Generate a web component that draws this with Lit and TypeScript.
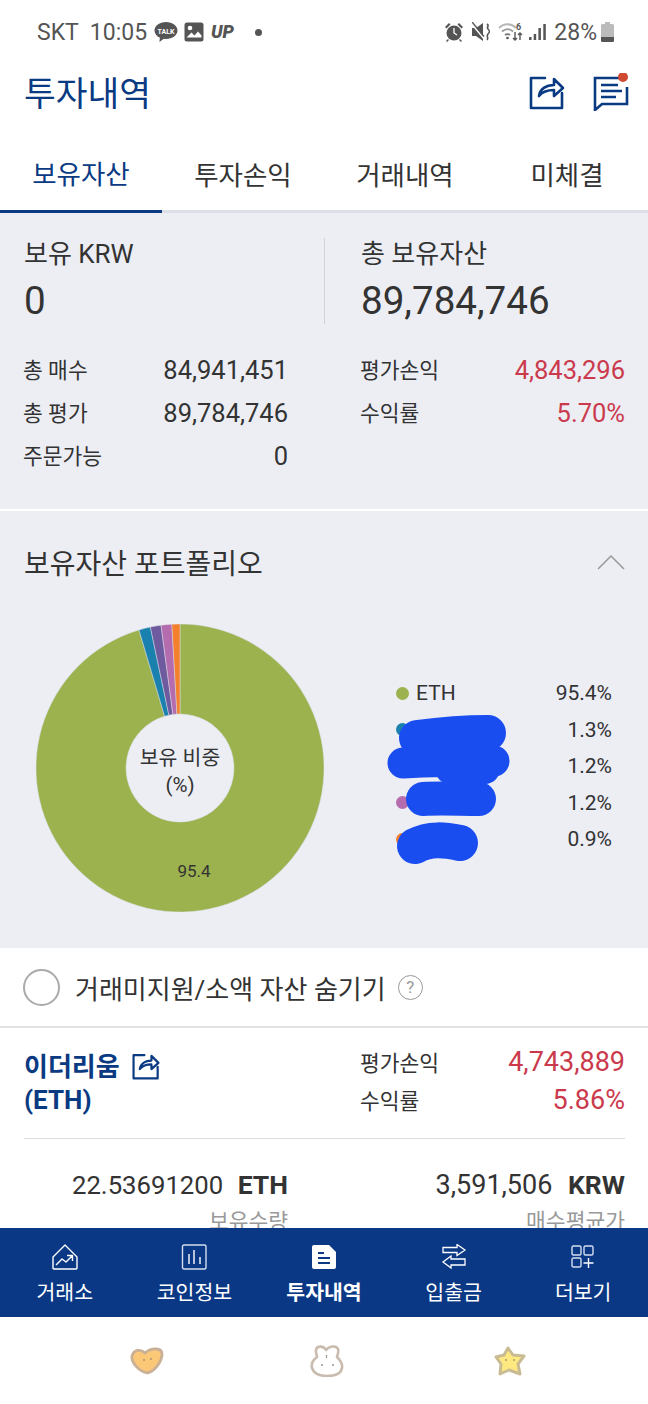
import { LitElement, html, css, svg } from "lit";
import { customElement } from "lit/decorators.js";

const slices = [
  { p: 95.4, c: "#9bb24e" },
  { p: 1.3, c: "#1a80ad" },
  { p: 1.2, c: "#6e5a9e" },
  { p: 1.2, c: "#b56cae" },
  { p: 0.9, c: "#f47f2d" },
];

function arc(cx: number, cy: number, ro: number, ri: number, a0: number, a1: number) {
  const pt = (r: number, a: number) => {
    const t = (a * Math.PI) / 180;
    return `${(cx + r * Math.sin(t)).toFixed(2)} ${(cy - r * Math.cos(t)).toFixed(2)}`;
  };
  const large = a1 - a0 > 180 ? 1 : 0;
  return `M${pt(ro, a0)}A${ro} ${ro} 0 ${large} 1 ${pt(ro, a1)}L${pt(ri, a1)}A${ri} ${ri} 0 ${large} 0 ${pt(ri, a0)}Z`;
}

const shareIcon = (s: number, sw: number) => html`<svg width=${s} height=${s} viewBox="0 0 36 36" fill="none" stroke="#0a3a82" stroke-width=${sw} stroke-linejoin="round" stroke-linecap="round">
  <path d="M16 4H2v30h31V19"/>
  <path d="M10 22c1-7 7-11 15-11V5l9 9-9 8v-6c-6 0-11 1-15 6z"/>
</svg>`;

@customElement("app-root")
export class AppRoot extends LitElement {
  static styles = css`
    :host { display: block; width: 648px; height: 1404px; font-family: Roboto, "Noto Sans CJK KR", sans-serif; color: #333; background: #fff; overflow: hidden; }
    .page { height: 1404px; display: flex; flex-direction: column; }
    .status { height: 64px; flex: none; box-sizing: border-box; padding: 0 34px 0 37px; display: flex; align-items: center; color: #555; font-size: 23px; }
    .status .l, .status .r { display: flex; align-items: center; }
    .status .l { gap: 4px; flex: 1; }
    .status .time { margin: 0 3px 0 7px; }
    .status .dot { width: 7px; height: 7px; border-radius: 50%; background: #555; margin-left: 10px; }
    .status .r { gap: 5px; }
    .up { margin-left: 1px; }
    .head { height: 56px; flex: none; display: flex; align-items: center; padding: 4px 17px 0 24px; box-sizing: border-box; }
    .head h1 { margin: 0; flex: 1; font-size: 34.5px; font-weight: 400; color: #0a3a82; line-height: 52px; }
    .head .icons { display: flex; gap: 28px; align-items: center; margin-top: -4px; }
    .tabs { height: 93px; flex: none; display: grid; grid-template-columns: 162px 162px 162px 162px; box-sizing: border-box; border-bottom: 3px solid #dcdfe6; }
    .tab { display: flex; align-items: center; justify-content: center; font-size: 26.5px; color: #333; height: 93px; box-sizing: border-box; padding-top: 14px; }
    .tab.on { color: #0a3a82; border-bottom: 3px solid #0a3a82; }
    .scroll { flex: 1; min-height: 0; overflow: hidden; }
    .summary { background: #eceef4; height: 298px; box-sizing: border-box; padding: 25px 23px 0 24px; border-bottom: 2px solid #fff; }
    .tops { display: grid; grid-template-columns: 300px 1fr; height: 85px; }
    .tops > div:last-child { border-left: 1px solid #cfd2d9; padding-left: 36px; }
    .cap { font-size: 26px; line-height: 32px; }
    .big { font-size: 38.6px; line-height: 46px; margin-top: 8px; }
    .stats { display: grid; grid-template-columns: 264px 264px; column-gap: 73px; margin-top: 25px; }
    .st { display: flex; justify-content: space-between; align-items: center; height: 43px; }
    .st .k { font-size: 21.5px; position: relative; top: -1px; left: -1px; }
    .st .v { font-size: 25.5px; }
    .red { color: #cb3a4c; }
    .port { background: #eceef4; height: 437px; position: relative; }
    .port-h { display: flex; align-items: center; justify-content: space-between; padding: 32px 23px 0 24px; height: 38px; font-size: 28px; }
    .chart { display: flex; margin-top: 43px; }
    .pie { margin-left: 36px; flex: none; }
    .legend { margin-left: 72px; width: 216px; margin-top: 51px; }
    .lg { display: flex; align-items: center; height: 36.5px; font-size: 21px; }
    .lg i { width: 13px; height: 13px; border-radius: 50%; margin-right: 7px; }
    .lg span:last-of-type { margin-left: auto; }
    .scribble { position: absolute; left: 380px; top: 200px; }
    .hide { height: 80px; display: flex; align-items: center; padding-left: 23px; font-size: 26px; box-sizing: border-box; border-bottom: 2px solid #e2e2e2; }
    .radio { width: 37px; height: 37px; border-radius: 50%; border: 2px solid #aaa; box-sizing: border-box; margin-right: 15px; }
    .q { width: 25px; height: 25px; border: 1.5px solid #999; border-radius: 50%; box-sizing: border-box; margin-left: 12px; font-size: 17px; line-height: 22px; text-align: center; color: #999; }
    .coin { display: grid; grid-template-columns: 337px 264px; padding: 15px 23px 0 24px; height: 110px; box-sizing: border-box; }
    .coin-n { color: #0a3a82; font-size: 26px; font-weight: 700; line-height: 33px; padding-top: 8px; }
    .coin-n svg { vertical-align: -4px; margin-left: 12px; }
    .coin .st { height: 38px; }
    .coin .st .v { font-size: 27px; }
    .rule { height: 1px; background: #ddd; margin: 0 23px 0 24px; }
    .hold { display: grid; grid-template-columns: 264px 264px; column-gap: 73px; padding: 26px 23px 0 24px; }
    .hold .a { text-align: right; font-size: 26.5px; line-height: 40px; white-space: nowrap; }
    .hold .a b { font-weight: 700; }
    .hold .n1 { font-size: 25.7px; margin-right: 8px; }
    .hold .n2 { font-size: 27px; margin-right: 9px; }
    .hold .b { text-align: right; font-size: 21.5px; line-height: 28px; color: #999; margin-top: 3px; }
    .nav { flex: none; height: 89px; background: #0a3885; display: grid; grid-template-columns: repeat(5, 1fr); color: #fff; }
    .ni { display: flex; flex-direction: column; align-items: center; padding-top: 16px; box-sizing: border-box; font-size: 20.5px; line-height: 30px; gap: 8px; }
    .ni svg { display: block; }
    .ni.on { font-weight: 700; }
    .gest { flex: none; height: 87px; display: flex; align-items: center; padding-left: 130px; }
    .gest svg { flex: none; }
    .gest .rabbit { margin-left: 145px; }
    .gest .star { margin-left: 148px; }
  `;

  render() {
    let a = 0;
    const arcs = slices.map((s) => {
      const a0 = a;
      a += (s.p / 100) * 360;
      return svg`<path d=${arc(144, 144, 144, 54, a0, a)} fill=${s.c} stroke="#d9dde3" stroke-width="0.5"/>`;
    });
    const legend = [
      ["#9bb24e", "ETH", "95.4%"],
      ["#1a80ad", "", "1.3%"],
      ["#6e5a9e", "", "1.2%"],
      ["#b56cae", "", "1.2%"],
      ["#f47f2d", "", "0.9%"],
    ];
    return html`<div class="page">
      <div class="status">
        <div class="l">
          <span>SKT</span><span class="time">10:05</span>
          <svg width="24" height="22" viewBox="0 0 24 22"><path d="M12 1C5.600 1 .5 4.800.5 9.500c0 3.100 2.200 5.700 5.400 7.200L5.400 21l4.400-3.200c.7.1 1.500.2 2.200.2 6.400 0 11.500-3.800 11.500-8.500S18.400 1 12 1z" fill="#555"/><text x="12" y="12.500" text-anchor="middle" font-size="7" font-weight="700" fill="#fff" font-family="Roboto">TALK</text></svg>
          <svg width="20" height="20" viewBox="0 0 20 20" style="margin-left:2px"><rect width="19" height="19" x=".5" y=".5" rx="2.500" fill="#555"/><circle cx="6" cy="6" r="2.300" fill="#fff"/><path d="M2.500 15.500l5-5 3 3 3.500-4 3.500 4v2z" fill="#fff"/></svg>
          <svg class="up" width="32" height="18" viewBox="0 0 32 18"><text x="2" y="15" font-size="18" font-weight="900" font-style="italic" fill="#555" font-family="Roboto">UP</text></svg>
          <i class="dot"></i>
        </div>
        <div class="r">
          <svg width="20" height="20" viewBox="0 0 20 20" fill="#555"><circle cx="10" cy="11" r="7.500"/><path d="M1 5l4-4 1.500 1.500-4 4zM19 5l-4-4-1.500 1.500 4 4zM4 17l-2 2 1 1 2-2zM16 17l2 2-1 1-2-2z"/><path d="M10 6v5l3 2" stroke="#fff" stroke-width="1.300" fill="none"/></svg>
          <svg width="19" height="20" viewBox="0 0 19 20" fill="#555" style="margin-left:3px"><path d="M0 6h4l7-5v18l-7-5H0z"/><path d="M-1 1l14 17" stroke="#fff" stroke-width="1.600"/><path d="M0 0l12 14.500" stroke="#555" stroke-width="1.400"/><path d="M15 2c3 2-1 3 1 5s2 3 0 5 1 4-1 6" stroke="#555" stroke-width="1.600" fill="none"/></svg>
          <svg width="26" height="20" viewBox="0 0 26 20" fill="none" style="margin-left:2px"><path d="M1 6c5-5 12-5 17 0" stroke="#b5b5b5" stroke-width="1.800"/><path d="M4 9.500c3.500-3 7.500-3 11 0" stroke="#999" stroke-width="1.800"/><path d="M7 13c2-1.500 3-1.500 5 0" stroke="#777" stroke-width="1.800"/><circle cx="9.500" cy="16" r="1.300" fill="#555"/><text x="18" y="8" font-size="9" font-weight="700" fill="#555" font-family="Roboto">6</text><path d="M17 10v8M15 16l2 2 2-2M22 18v-7M20 13l2-2 2 2" stroke="#555" stroke-width="1.400"/></svg>
          <svg width="17" height="18" viewBox="0 0 17 18" fill="#555"><rect x="0" y="14" width="2.500" height="3"/><rect x="4.700" y="11" width="2.500" height="6"/><rect x="9.400" y="5" width="2.500" height="12"/><rect x="14.300" y="1" width="2.500" height="16"/></svg>
          <span style="margin-left:3px">28%</span>
          <svg width="13" height="20" viewBox="0 0 13 20" style="margin-left:-1px"><path d="M4 0h5v2h2.500q1.500 0 1.500 1.500V18.500q0 1.500-1.500 1.500h-10Q0 20 0 18.500V3.500Q0 2 1.500 2H4z" fill="#bbb"/><path d="M0 15h13v3.500q0 1.500-1.500 1.500h-10Q0 20 0 18.500z" fill="#555"/></svg>
        </div>
      </div>
      <div class="head">
        <h1>투자내역</h1>
        <div class="icons">
          ${shareIcon(36, 2.6)}
          <svg width="38" height="38" viewBox="0 0 38 38" fill="none" stroke="#0a3a82" stroke-width="2.600">
            <path d="M26 5H2v32l7-6h25V14"/>
            <path d="M8 12h17M8 18h21M8 24h15"/>
            <circle cx="30" cy="4" r="5" fill="#cf4a30" stroke="none"/>
          </svg>
        </div>
      </div>
      <div class="tabs">
        <div class="tab on">보유자산</div><div class="tab">투자손익</div><div class="tab">거래내역</div><div class="tab">미체결</div>
      </div>
      <div class="scroll">
        <div class="summary">
          <div class="tops">
            <div><div class="cap">보유 KRW</div><div class="big">0</div></div>
            <div><div class="cap">총 보유자산</div><div class="big">89,784,746</div></div>
          </div>
          <div class="stats">
            <div class="st"><span class="k">총 매수</span><span class="v">84,941,451</span></div>
            <div class="st"><span class="k">평가손익</span><span class="v red">4,843,296</span></div>
            <div class="st"><span class="k">총 평가</span><span class="v">89,784,746</span></div>
            <div class="st"><span class="k">수익률</span><span class="v red">5.70%</span></div>
            <div class="st"><span class="k">주문가능</span><span class="v">0</span></div>
          </div>
        </div>
        <div class="port">
          <div class="port-h"><span>보유자산 포트폴리오</span>
            <svg width="28" height="18" viewBox="0 0 28 18" fill="none" stroke="#999" stroke-width="1.500"><path d="M1 16L14 3l13 13"/></svg>
          </div>
          <div class="chart">
            <svg class="pie" width="288" height="288" viewBox="0 0 288 288">
              ${arcs}
              <text x="144" y="141" text-anchor="middle" font-size="20.500" fill="#333" font-family="Roboto, 'Noto Sans CJK KR', sans-serif">보유 비중</text>
              <text x="144" y="168" text-anchor="middle" font-size="20.500" fill="#333" font-family="Roboto, 'Noto Sans CJK KR', sans-serif">(%)</text>
              <text x="158" y="253" text-anchor="middle" font-size="17" fill="#333" font-family="Roboto, sans-serif">95.4</text>
            </svg>
            <div class="legend">
              ${legend.map((l) => html`<div class="lg"><i style="background:${l[0]}"></i><span>${l[1]}</span><span>${l[2]}</span></div>`)}
            </div>
          </div>
          <svg class="scribble" width="140" height="160" viewBox="0 0 140 160" fill="none" stroke="#1a4df0" stroke-linecap="round" stroke-linejoin="round">
            <path d="M37 27C60 24 85 22 108 22" stroke-width="36"/>
            <path d="M23 52C60 50 100 50 114 50" stroke-width="31"/>
            <path d="M70 58C80 60 95 60 105 58" stroke-width="30"/>
            <path d="M43 88C60 87 80 88 99 88" stroke-width="34"/>
            <path d="M35 135C50 127 65 129 80 132" stroke-width="36"/>
          </svg>
        </div>
        <div class="hide"><span class="radio"></span><span>거래미지원/소액 자산 숨기기</span><span class="q">?</span></div>
        <div class="coin">
          <div class="coin-n"><div>이더리움${shareIcon(28, 2.8)}</div><div>(ETH)</div></div>
          <div>
            <div class="st"><span class="k">평가손익</span><span class="v red">4,743,889</span></div>
            <div class="st"><span class="k">수익률</span><span class="v red">5.86%</span></div>
          </div>
        </div>
        <div class="rule"></div>
        <div class="hold">
          <div><div class="a"><span class="n1">22.53691200</span> <b>ETH</b></div><div class="b">보유수량</div></div>
          <div><div class="a"><span class="n2">3,591,506</span> <b>KRW</b></div><div class="b">매수평균가</div></div>
        </div>
      </div>
      <div class="nav">
        <div class="ni">
          <svg width="26" height="26" viewBox="0 0 26 26" fill="none" stroke="#fff" stroke-width="1.400" stroke-linejoin="round"><path d="M1 13L13 1l12 12v11q0 1-1 1H2q-1 0-1-1z"/><path d="M4 21l6-6 4 3 6-6M15 11.500h5.500V17"/></svg>
          <span>거래소</span>
        </div>
        <div class="ni">
          <svg width="26" height="26" viewBox="0 0 26 26" fill="none" stroke="#fff" stroke-width="1.400"><rect x="1.500" y="1" width="23.500" height="24" rx="1.500" stroke="#d5def0"/><path d="M8 10v10M13 6v14M19 13v7"/></svg>
          <span>코인정보</span>
        </div>
        <div class="ni on">
          <svg width="26" height="26" viewBox="0 0 26 26"><path d="M1 3q0-2 2-2h15l7 7v15q0 2-2 2H3q-2 0-2-2z" fill="#fff"/><path d="M7 9h6M7 14h12M7 19h12" stroke="#0a3885" stroke-width="2"/></svg>
          <span>투자내역</span>
        </div>
        <div class="ni">
          <svg width="26" height="26" viewBox="0 0 26 26" fill="none" stroke="#fff" stroke-width="1.300" stroke-linejoin="miter"><path d="M2 3.500H16V.5L24 6l-8 5.500v-3H2z"/><path d="M24 15H10v-3l-8 6 8 6v-3h14z"/></svg>
          <span>입출금</span>
        </div>
        <div class="ni">
          <svg width="26" height="26" viewBox="0 0 26 26" fill="none" stroke="#d5def0" stroke-width="1.400"><rect x="2" y="2" width="9" height="9" rx="1.500"/><rect x="14" y="2" width="9" height="9" rx="1.500"/><rect x="2" y="14" width="9" height="9" rx="1.500"/><path d="M18.500 14v10M13.500 19h10" stroke="#fff"/></svg>
          <span>더보기</span>
        </div>
      </div>
      <div class="gest">
        <svg width="34" height="28" viewBox="0 0 34 28"><path d="M15 6C11 2 4 2 2 9 1 16 9 24 17 26 24 25 32 15 32 7 32 1 22 0 15 6z" fill="#fbc878" stroke="#c9b096" stroke-width="2.800" stroke-linejoin="round"/><circle cx="14" cy="13" r="1" fill="#b09070"/><circle cx="21" cy="12" r="1" fill="#b09070"/></svg>
        <svg class="rabbit" width="36" height="32" viewBox="0 0 36 32"><path d="M17 5C15 1 8 0 7 5 6.500 8 8 10 8 12 4 15 2 19 3 23 5 29 11 31 18 31 25 31 32 29 33 23 34 18 30 14 28 12 29 9 30 6 29 4 27 0 20 1 17 5z" fill="#fff" stroke="#c9bcae" stroke-width="2.600" stroke-linejoin="round"/><circle cx="13" cy="20" r="1" fill="#a09488"/><circle cx="24" cy="20" r="1" fill="#a09488"/><path d="M17.500 10v3" stroke="#a09488" stroke-width="1.200"/></svg>
        <svg class="star" width="34" height="32" viewBox="0 0 34 32"><path d="M15 3 20 10 31 11 25 19 27 29 16 25 7 29 8 19 3 12 11 10z" fill="#fde97f" stroke="#c9bc94" stroke-width="3" stroke-linejoin="round"/><circle cx="13" cy="15" r="1" fill="#a89868"/><circle cx="21" cy="15" r="1" fill="#a89868"/></svg>
      </div>
    </div>`;
  }
}
